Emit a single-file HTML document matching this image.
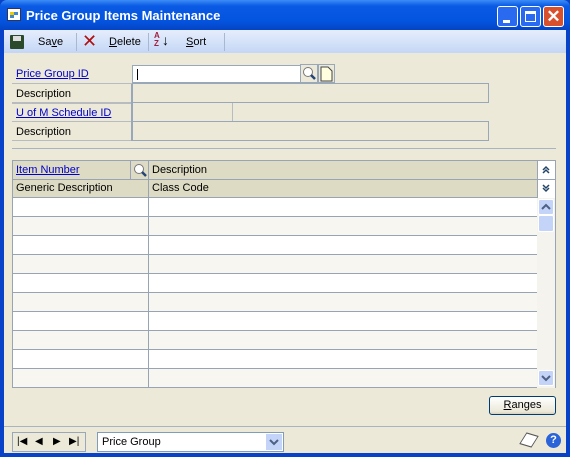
<!DOCTYPE html><html><head><style>
*{margin:0;padding:0;box-sizing:border-box}
body{width:570px;height:457px;overflow:hidden;font-family:"Liberation Sans",sans-serif;font-size:11px;background:#0842c8;position:relative}
.a{position:absolute}
.win{left:4px;top:30px;width:562px;height:423px;background:#ECE9D8}
.title{left:0;top:0;width:570px;height:30px;background:linear-gradient(#3c8cf6,#0a5ae4 20%,#0454e0 70%,#0444c4);border-radius:7px 7px 0 0;color:#fff;font-weight:bold;font-size:13px}
.tb{left:4px;top:30px;width:562px;height:23px;background:linear-gradient(#e6eefc,#c4d6f6)}
.lnk{color:#0000cc;text-decoration:underline}
.box{border:1px solid #98a8b8;background:#ECE9D8}
.row{left:12px;width:476px;height:19px;border-bottom:1px solid #b8bcc0}
.btn{border:1px solid #003c74;border-radius:3px;background:linear-gradient(#fff,#ece9d8 85%,#d6d0c0);text-align:center}
</style></head><body>
<div class="a title"><div class="a" style="left:7px;top:8px;width:14px;height:13px;background:#fff;border:1px solid #335"><div class="a" style="left:2px;top:3px;width:4px;height:3px;background:#ec0"></div><div class="a" style="left:6px;top:3px;width:4px;height:3px;background:#48c"></div><div class="a" style="left:2px;top:6px;width:4px;height:3px;background:#48c"></div></div>
<div class="a" style="left:26px;top:8px">Price Group Items Maintenance</div>
<div class="a" style="left:497px;top:6px;width:21px;height:21px;border:1px solid #fff;border-radius:3px;background:#2a6af0"><div class="a" style="left:5px;top:13px;width:7px;height:3px;background:#fff"></div></div>
<div class="a" style="left:520px;top:6px;width:21px;height:21px;border:1px solid #fff;border-radius:3px;background:#2a6af0"><div class="a" style="left:4px;top:4px;width:11px;height:11px;border:1px solid #fff;border-top-width:3px"></div></div>
<div class="a" style="left:543px;top:6px;width:21px;height:21px;border:1px solid #fff;border-radius:3px;background:#d8502c;color:#fff;font-size:17px;text-align:center;line-height:19px">✕</div>
</div>
<div class="a win"></div>
<div class="a tb"></div>
<div class="a" style="left:10px;top:35px;width:14px;height:14px;background:#2a4a2a;border-radius:1px"><div class="a" style="left:3px;top:1px;width:8px;height:5px;background:#ddd"></div></div>
<div class="a" style="left:38px;top:36px"><span>Sa<u>v</u>e</span></div>
<div class="a" style="left:76px;top:33px;width:1px;height:18px;background:#a8b8d0"></div>
<div class="a" style="left:82px;top:31px;font-size:18px;color:#b01010">✕</div>
<div class="a" style="left:109px;top:36px"><u>D</u>elete</div>
<div class="a" style="left:148px;top:33px;width:1px;height:18px;background:#a8b8d0"></div>
<div class="a" style="left:154px;top:32px;font-size:8px;line-height:8px;color:#a02040;font-weight:bold">A<br>Z</div><div class="a" style="left:162px;top:32px;font-size:14px">↓</div>
<div class="a" style="left:186px;top:36px"><u>S</u>ort</div>
<div class="a" style="left:224px;top:33px;width:1px;height:18px;background:#a8b8d0"></div>

<div class="a row" style="top:65px;width:120px"><span class="a lnk" style="left:4px;top:3px">Price Group ID</span></div>
<div class="a" style="left:132px;top:65px;width:169px;height:18px;background:#fff;border:1px solid #98a8b8"><div class="a" style="left:4px;top:3px;width:1px;height:11px;background:#000"></div></div>
<div class="a box" style="left:300px;top:64px;width:18px;height:19px"><svg width="16" height="17"><circle cx="7" cy="7" r="4.5" fill="#fff" stroke="#777"/><path d="M10 10l4 4" stroke="#247" stroke-width="2.5"/></svg></div>
<div class="a box" style="left:318px;top:64px;width:17px;height:19px"><svg width="15" height="17"><path d="M2 2h7l4 4v10H2z" fill="#ffffe0" stroke="#444"/></svg></div>
<div class="a row" style="top:84px;width:120px"><span class="a" style="left:4px;top:4px">Description</span></div>
<div class="a box" style="left:132px;top:83px;width:357px;height:20px"></div>
<div class="a row" style="top:103px;width:120px"><span class="a lnk" style="left:4px;top:4px">U of M Schedule ID</span></div>
<div class="a" style="left:132px;top:103px;width:101px;height:19px;border-right:1px solid #b8bcc0;border-left:1px solid #98a8b8"></div>
<div class="a row" style="top:122px;width:120px"><span class="a" style="left:4px;top:4px">Description</span></div>
<div class="a box" style="left:132px;top:121px;width:357px;height:20px"></div>
<div class="a" style="left:12px;top:103px;width:120px;height:1px;background:#b8bcc0"></div>
<div class="a" style="left:131px;top:84px;width:1px;height:57px;background:#98a8b8"></div>
<div class="a" style="left:12px;top:148px;width:544px;height:1px;background:#a8b4c0"></div>

<div class="a" style="left:12px;top:160px;width:544px;height:228px;border:1px solid #98a4b4;background:#fff">
<div class="a" style="left:0;top:0;width:524px;height:36px;background:#DEDBC4"></div>
<div class="a" style="left:0;top:18px;width:542px;height:1px;background:#98a4b4"></div>
<div class="a" style="left:0;top:36px;width:524px;height:1px;background:#98a4b4"></div>
<div class="a" style="left:117px;top:0;width:1px;height:18px;background:#98a4b4"></div>
<div class="a" style="left:135px;top:0;width:1px;height:227px;background:#98a4b4"></div>
<div class="a" style="left:524px;top:0;width:1px;height:37px;background:#98a4b4"></div>
<span class="a lnk" style="left:3px;top:3px">Item Number</span>
<svg class="a" style="left:119px;top:1px" width="16" height="16"><circle cx="7" cy="7" r="4.5" fill="#fff" stroke="#777"/><path d="M10 10l4 4" stroke="#247" stroke-width="2.5"/></svg>
<span class="a" style="left:139px;top:3px">Description</span>
<span class="a" style="left:3px;top:21px">Generic Description</span>
<span class="a" style="left:139px;top:21px">Class Code</span>
<div class="a" style="left:526px;top:2px;width:14px;height:14px;border-radius:7px;background:#fff"><svg width="14" height="14"><path d="M4 7l3-3 3 3M4 10l3-3 3 3" fill="none" stroke="#246" stroke-width="1.5"/></svg></div>
<div class="a" style="left:526px;top:20px;width:14px;height:14px;border-radius:7px;background:#fff"><svg width="14" height="14"><path d="M4 4l3 3 3-3M4 7l3 3 3-3" fill="none" stroke="#246" stroke-width="1.5"/></svg></div>
<div class="a" style="left:0;top:37px;width:524px;height:190px;background:repeating-linear-gradient(#fff 0 18px,#98a4b4 18px 19px,#f7f6f0 19px 37px,#98a4b4 37px 38px)"></div>
<div class="a" style="left:135px;top:37px;width:1px;height:190px;background:#98a4b4"></div>
<div class="a" style="left:524px;top:37px;width:18px;height:190px;background:#f4f3ee"></div>
<div class="a" style="left:525px;top:38px;width:16px;height:16px;background:#c4d4f8;border:1px solid #fff;border-radius:2px"><svg width="14" height="14"><path d="M3 9l4-4 4 4" fill="none" stroke="#4d6185" stroke-width="2"/></svg></div>
<div class="a" style="left:525px;top:54px;width:16px;height:17px;background:#c4d4f8;border:1px solid #fff;border-radius:2px"></div>
<div class="a" style="left:525px;top:209px;width:16px;height:16px;background:#c4d4f8;border:1px solid #fff;border-radius:2px"><svg width="14" height="14"><path d="M3 5l4 4 4-4" fill="none" stroke="#4d6185" stroke-width="2"/></svg></div>
</div>

<div class="a btn" style="left:489px;top:396px;width:67px;height:19px;line-height:17px"><u>R</u>anges</div>
<div class="a" style="left:4px;top:426px;width:562px;height:1px;background:#a8b4c0"></div>
<div class="a box" style="left:12px;top:432px;width:74px;height:20px;font-size:10px;line-height:18px"><span class="a" style="left:4px">|◀</span><span class="a" style="left:22px">◀</span><span class="a" style="left:40px">▶</span><span class="a" style="left:56px">▶|</span></div>
<div class="a" style="left:97px;top:432px;width:187px;height:20px;background:#fff;border:1px solid #7f9db9"><span class="a" style="left:4px;top:3px">Price Group</span><div class="a" style="left:168px;top:1px;width:16px;height:16px;background:#c4d4f8"><svg width="16" height="16"><path d="M4 6l4 4 4-4" fill="none" stroke="#4d6185" stroke-width="2"/></svg></div></div>
<div class="a" style="left:522px;top:434px;width:14px;height:12px;background:#fff;border:1px solid #555;transform:skewX(-20deg) rotate(15deg)"></div>
<div class="a" style="left:546px;top:433px;width:15px;height:15px;border-radius:8px;background:#2a64d8;color:#fff;font-weight:bold;font-size:11px;text-align:center;line-height:15px">?</div>
</body></html>
